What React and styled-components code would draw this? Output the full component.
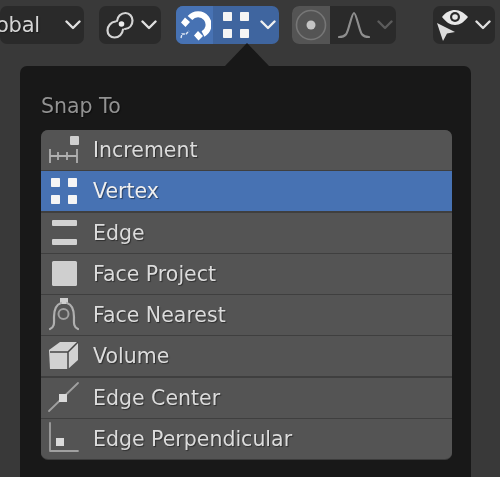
import React from "react";
import styled, { createGlobalStyle } from "styled-components";

const Global = createGlobalStyle`
  html, body { margin: 0; padding: 0; background: #393939; }
  #root { width: 500px; height: 477px; overflow: hidden; }
`;

const Page = styled.div`
  position: relative;
  width: 500px;
  height: 477px;
  overflow: hidden;
  background: #393939;
  font-family: "DejaVu Sans", sans-serif;
  filter: blur(0.7px);
  display: flex;
  flex-direction: column;
`;

const Toolbar = styled.div`
  display: flex;
  align-items: flex-start;
  height: 66px;
  padding-top: 6px;
  box-sizing: border-box;
  flex-shrink: 0;
`;

const Group = styled.div`
  display: flex;
  align-items: center;
  justify-content: ${(p) => p.$justify || "flex-start"};
  width: ${(p) => p.$w}px;
  height: 38px;
  margin-left: ${(p) => p.$ml}px;
  background: ${(p) => p.$bg || "#2a2a2a"};
  border-radius: 7px;
  overflow: hidden;
  flex-shrink: 0;
  box-sizing: border-box;
`;

const GlobalLabel = styled.span`
  font-size: 21px;
  color: #d6d6d6;
  margin-right: 25px;
  white-space: nowrap;
  letter-spacing: -0.2px;
  text-shadow: 1px 1px 1px rgba(0, 0, 0, 0.4);
`;

const Seg = styled.div`
  display: flex;
  align-items: center;
  justify-content: center;
  height: 100%;
  width: ${(p) => p.$w}px;
  background: ${(p) => p.$bg || "transparent"};
  margin-right: ${(p) => p.$mr || 0}px;
  flex-shrink: 0;
`;

const Panel = styled.div`
  width: 451px;
  margin-left: 20px;
  flex: 1;
  background: #181818;
  border-radius: 7px 7px 0 0;
  padding: 26px 19px 0 21px;
  box-sizing: border-box;
`;

const Notch = styled.div`
  position: absolute;
  left: 224px;
  top: 43px;
  width: 46px;
  height: 24px;
  background: #181818;
  clip-path: polygon(50% 0, 100% 100%, 0 100%);
`;

const Title = styled.div`
  font-size: 20.5px;
  line-height: 28px;
  height: 38px;
  color: #929292;
  text-shadow: 1px 1px 1px rgba(0, 0, 0, 0.5);
`;

const List = styled.div`
  width: 411px;
  border-radius: 7px;
  overflow: hidden;
  background: #3f3f3f;
  display: flex;
  flex-direction: column;
  gap: 1.3px;
  height: 330px;
  border-bottom: 1px solid #3c3c3c;
  box-sizing: border-box;
`;

const Row = styled.div`
  flex: 1;
  display: flex;
  align-items: center;
  background: ${(p) => (p.$active ? "#4772b3" : "#545454")};
  color: ${(p) => (p.$active ? "#f0f0f0" : "#dcdcdc")};
  font-size: 20.5px;
  padding-left: 6px;
  text-shadow: 1px 1px 1px rgba(0, 0, 0, 0.45);
`;

const IconBox = styled.div`
  width: 34px;
  height: 34px;
  margin-right: 12px;
  flex-shrink: 0;
  display: flex;
  align-items: center;
  justify-content: center;
`;

const Chevron = ({ c = "#e0e0e0", size = 16 }) => (
  <svg width={size} height={size} viewBox="0 0 16 16" fill="none">
    <path d="M1.5 4.5L8 11l6.5-6.5" stroke={c} strokeWidth="2.4" strokeLinecap="round" strokeLinejoin="round" />
  </svg>
);

const VertexIcon = () => (
  <svg width="34" height="34" viewBox="0 0 34 34" fill="#f5f5f5">
    <rect x="4" y="4" width="9" height="9" rx="0.8" />
    <rect x="21" y="4" width="9" height="9" rx="0.8" />
    <rect x="4" y="21" width="9" height="9" rx="0.8" />
    <rect x="21" y="21" width="9" height="9" rx="0.8" />
  </svg>
);

const Icons = {
  increment: (
    <svg width="34" height="34" viewBox="0 0 34 34" fill="#cfcfcf">
      <rect x="23" y="3" width="9" height="9" rx="1" />
      <path d="M3 16v14M11 19v8M20 19v8M30 16v14M3 23h27" stroke="#b0b0b0" strokeWidth="1.8" fill="none" />
    </svg>
  ),
  vertex: <VertexIcon />,
  edge: (
    <svg width="34" height="34" viewBox="0 0 34 34" fill="#d2d2d2">
      <rect x="5" y="4" width="25" height="6" rx="1" />
      <rect x="5" y="23" width="25" height="6" rx="1" />
    </svg>
  ),
  face: (
    <svg width="34" height="34" viewBox="0 0 34 34">
      <rect x="5" y="4" width="25" height="25" rx="1.5" fill="#cfcfcf" />
    </svg>
  ),
  nearest: (
    <svg width="34" height="34" viewBox="0 0 34 34" fill="none">
      <rect x="13" y="0" width="8" height="6" fill="#cfcfcf" />
      <path d="M14 5C8 7 7 13 7 19c0 5 1 10-4 12M20 5c6 2 7 8 7 14 0 5-1 10 4 12" stroke="#b0b0b0" strokeWidth="2.2" strokeLinecap="round" />
      <circle cx="16.5" cy="16" r="5" stroke="#a0a0a0" strokeWidth="2" />
    </svg>
  ),
  volume: (
    <svg width="34" height="34" viewBox="0 0 34 34">
      <path d="M2 11L13 3h18v18l-10 9H3z" fill="#d2d2d2" />
      <path d="M3 13h18v17M21 13L31 3" stroke="#454545" strokeWidth="1.5" fill="none" />
    </svg>
  ),
  center: (
    <svg width="34" height="34" viewBox="0 0 34 34">
      <path d="M2 30L31 2" stroke="#a0a0a0" strokeWidth="1.8" strokeLinecap="round" />
      <rect x="12" y="13" width="8" height="8" fill="#dadada" />
    </svg>
  ),
  perp: (
    <svg width="34" height="34" viewBox="0 0 34 34" fill="none">
      <path d="M3 1v28h28" stroke="#a0a0a0" strokeWidth="1.8" strokeLinecap="round" strokeLinejoin="round" />
      <rect x="9" y="16" width="8" height="8" fill="#dadada" />
    </svg>
  ),
};

const items = [
  ["increment", "Increment"],
  ["vertex", "Vertex", true],
  ["edge", "Edge"],
  ["face", "Face Project"],
  ["nearest", "Face Nearest"],
  ["volume", "Volume"],
  ["center", "Edge Center"],
  ["perp", "Edge Perpendicular"],
];

export default function App() {
  return (
    <>
      <Global />
      <Page>
        <Toolbar>
          <Group $w={84} $ml={0} $justify="flex-end">
            <GlobalLabel>obal</GlobalLabel>
            <Seg $w={16} $mr={3}><Chevron /></Seg>
          </Group>
          <Group $w={62} $ml={15}>
            <Seg $w={42}>
              <svg width="32" height="32" viewBox="0 0 32 32" fill="none" stroke="#d4d4d4" strokeWidth="2.2" strokeLinecap="round">
                <path d="M11.5 12.5C7 13 3.5 17 3.5 21.5c0 4 3 7 7 7 4.5 0 8-3.5 8.5-8" />
                <path d="M21 20c4.5-.5 7.5-4 7.5-8.500 0-4-3-7.500-7-7.500-4.500 0-8 3.500-8.500 8" />
                <circle cx="17.500" cy="15" r="2.800" fill="#ececec" stroke="none" />
              </svg>
            </Seg>
            <Seg $w={16}><Chevron /></Seg>
          </Group>
          <Group $w={103} $ml={15} $bg="#3f659f">
            <Seg $w={37} $bg="#4772b3" $mr={2}>
              <svg width="32" height="32" viewBox="0 0 32 32" fill="none">
                <path d="M11 9A10.5 10.5 0 1 1 24 25" stroke="#fff" strokeWidth="6" />
                <path d="M6 8.5l5 4.5-4.500 5-4.500-4.500zM19 22l5 5-4.500 4.500-4.500-5z" fill="#fff" />
                <path d="M2 29l1-4h4l3-3" stroke="#dfe8f5" strokeWidth="1.4" strokeDasharray="3 1" />
              </svg>
            </Seg>
            <Seg $w={42}><VertexIcon /></Seg>
            <Seg $w={22}><Chevron c="#f0f0f0" /></Seg>
          </Group>
          <Group $w={104} $ml={13}>
            <Seg $w={38} $bg="#545454">
              <svg width="32" height="32" viewBox="0 0 32 32" fill="none">
                <circle cx="16" cy="16" r="14.5" stroke="#767676" strokeWidth="1.6" />
                <circle cx="16" cy="16" r="4.5" fill="#c4c4c4" />
              </svg>
            </Seg>
            <Seg $w={47}>
              <svg width="32" height="30" viewBox="0 0 32 30" fill="none">
                <path d="M1 27c8 0 8-4 11-14 2-7 3-10 4-10s2 3 4 10c3 10 3 14 11 14" stroke="#8e8e8e" strokeWidth="2.2" strokeLinecap="round" />
              </svg>
            </Seg>
            <Seg $w={16}><Chevron c="#5c5c5c" /></Seg>
          </Group>
          <Group $w={62} $ml={37}>
            <Seg $w={42}>
              <svg width="36" height="36" viewBox="0 0 36 36">
                <path d="M6 10C10 5 14 3 19 3s9 3 13 7c-4 5-8 8-13 8S10 15 6 10z" fill="#e8e8e8" />
                <circle cx="19" cy="10" r="5" fill="#2a2a2a" />
                <circle cx="19" cy="10" r="2.8" fill="#e8e8e8" />
                <path d="M1 16l18 9-8 1.5L7 34z" fill="#dcdcdc" />
              </svg>
            </Seg>
            <Seg $w={16}><Chevron /></Seg>
          </Group>
        </Toolbar>
        <Notch />
        <Panel>
          <Title>Snap To</Title>
          <List>
            {items.map(([icon, label, active]) => (
              <Row key={label} $active={active}>
                <IconBox>{Icons[icon]}</IconBox>
                {label}
              </Row>
            ))}
          </List>
        </Panel>
      </Page>
    </>
  );
}
